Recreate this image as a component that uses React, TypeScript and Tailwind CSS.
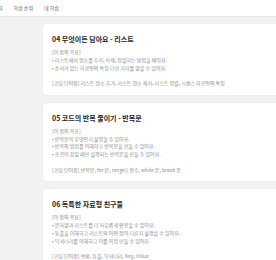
import React from 'react';

type Chapter = {
  title: string;
  goals: string[];
  words: string;
};

const chapters: Chapter[] = [
  {
    title: '04 무엇이든 담아요 - 리스트',
    goals: [
      '리스트에서 원소를 추가, 삭제, 정렬하는 방법을 배워요.',
      '순서가 있는 자료형의 특징 다섯 가지를 말할 수 있어요.',
    ],
    words: '리스트 원소 추가, 리스트 원소 제거, 리스트 정렬, 시퀀스 자료형의 특징',
  },
  {
    title: '05 코드의 반복 줄이기 - 반복문',
    goals: [
      '반복문이 무엇인지 설명할 수 있어요.',
      '반복의 범위를 이해하고 반복문을 만들 수 있어요.',
      '조건이 참일 때만 실행되는 반복문을 만들 수 있어요.',
    ],
    words: '반복문, for 문, range() 함수, while 문, break 문',
  },
  {
    title: '06 독특한 자료형 친구들',
    goals: [
      '문자열과 리스트를 더 자유롭게 활용할 수 있어요.',
      '튜플을 이해하고 리스트와 어떤 점이 다른지 설명할 수 있어요.',
      '딕셔너리를 이해하고 이를 직접 만들 수 있어요.',
    ],
    words: '변환, 튜플, 딕셔너리, Key, Value',
  },
];

function ChapterCard({ chapter }: { chapter: Chapter }) {
  return (
    <div className="w-[300px] shrink-0 rounded-[4px] bg-white pl-[9px] pr-4 pt-[10px] pb-[8px] shadow-[0_0_2px_rgba(0,0,0,0.06)]">
      <h2 className="text-[7px] font-bold leading-[10px] text-[#1f1f1f]">{chapter.title}</h2>
      <div className="mt-[4px] text-[5px] leading-[7.75px] text-[#8c8c8c]">
        <p>[이 장의 목표]</p>
        {chapter.goals.map(goal => (
          <p key={goal}>• {goal}</p>
        ))}
        <p className="mt-[7.75px]">[코딩 단어장] {chapter.words}</p>
      </div>
    </div>
  );
}

export default function App() {
  return (
    <div
      className="h-[260px] w-[276px] overflow-hidden bg-[#f1f2f4]"
      style={{ fontFamily: '"Noto Sans CJK KR", "Noto Sans", sans-serif' }}
    >
      {/* Top navigation (scrolled, first item partly off-screen) */}
      <div className="flex h-[16px] items-center gap-[11px] bg-white text-[5px] text-[#555] shadow-[0_1px_1px_rgba(0,0,0,0.04)]">
        <span className="-ml-[17px]">학습 코치</span>
        <span>학습 순위</span>
        <span>내 학습</span>
      </div>

      {/* Chapter list */}
      <div className="flex flex-col gap-[8px] pl-[43px] pt-[8px]">
        {chapters.map(chapter => (
          <ChapterCard key={chapter.title} chapter={chapter} />
        ))}
      </div>
    </div>
  );
}
